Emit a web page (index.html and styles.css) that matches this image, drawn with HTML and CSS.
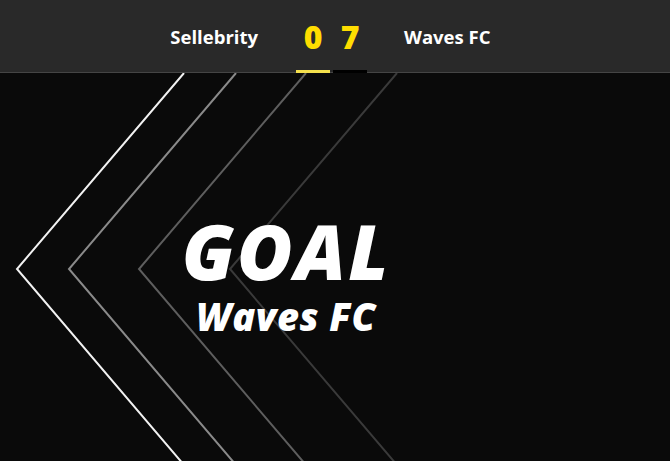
FILE: index.html
```html
<!DOCTYPE html>
<html>
<head>
<meta charset="utf-8">
<link rel="stylesheet" href="styles.css">
</head>
<body>
<div class="app">
  <header class="scorebar">
    <div class="team team-home">Sellebrity</div>
    <div class="score">
      <div class="digit active">0</div>
      <div class="digit">7</div>
    </div>
    <div class="team team-away">Waves FC</div>
  </header>
  <main class="stage">
    <svg class="chevrons" width="670" height="388" viewBox="0 73 670 388">
      <polyline points="184,73 17,269 184,465" fill="none" stroke="#f2f2f2" stroke-width="2"/>
      <polyline points="236,73 69,269 236,465" fill="none" stroke="#8a8a8a" stroke-width="2"/>
      <polyline points="306,73 139,269 306,465" fill="none" stroke="#5e5e5e" stroke-width="2"/>
      <polyline points="397,73 230,269 397,465" fill="none" stroke="#3a3a3a" stroke-width="2"/>
    </svg>
    <div class="message">
      <div class="goal">GOAL</div>
      <div class="scorer">Waves FC</div>
    </div>
  </main>
</div>
</body>
</html>
```
FILE: styles.css
```css
html, body {
  margin: 0;
  padding: 0;
  background: #0a0a0a;
}
.app {
  width: 670px;
  height: 461px;
  display: flex;
  flex-direction: column;
  font-family: "Open Sans", "Noto Sans", sans-serif;
  overflow: hidden;
}
.scorebar {
  height: 72px;
  background: #292929;
  border-bottom: 1px solid #454545;
  display: flex;
  align-items: center;
  justify-content: center;
  padding-right: 8px;
  color: #fff;
  flex-shrink: 0;
}
.team {
  font-size: 18.5px;
  font-weight: 700;
  width: 130px;
}
.team-home {
  text-align: right;
  margin-right: 38px;
}
.team-away {
  text-align: left;
  margin-left: 37px;
}
.score {
  display: flex;
  gap: 3px;
  align-self: stretch;
}
.digit {
  width: 34px;
  display: flex;
  align-items: center;
  justify-content: center;
  color: #ffdd00;
  font-size: 32px;
  font-weight: 800;
  border-bottom: 3px solid #000;
  box-sizing: border-box;
  padding-top: 3px;
  margin-bottom: -1px;
}
.digit.active {
  border-bottom-color: #f4e04d;
}
.stage {
  position: relative;
  flex: 1;
  background: #0a0a0a;
  display: flex;
  align-items: center;
  justify-content: center;
  padding-right: 98px;
  padding-top: 16px;
}
.chevrons {
  position: absolute;
  left: 0;
  top: 0;
}
.message {
  position: relative;
  display: flex;
  flex-direction: column;
  align-items: center;
  gap: 6px;
  color: #fff;
  font-style: italic;
  font-weight: 800;
}
.goal {
  font-size: 76px;
  line-height: 76px;
  letter-spacing: 2px;
}
.scorer {
  font-size: 38px;
  line-height: 42px;
  letter-spacing: 0.5px;
}
```
